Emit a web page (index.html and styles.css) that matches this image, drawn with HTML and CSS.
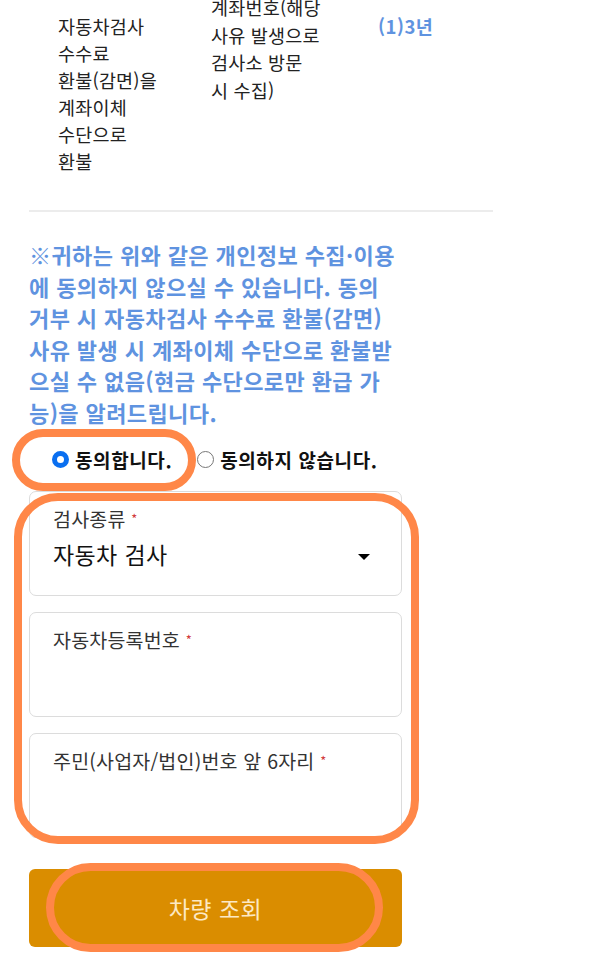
FILE: index.html
```html
<!DOCTYPE html>
<html lang="ko">
<head>
    <meta charset="UTF-8">
    <meta name="viewport" content="width=device-width, initial-scale=1.0">
    <title>자동차검사 차량 조회</title>
    <link rel="stylesheet" href="styles.css">
</head>
<body>
<div class="page">
    <div class="consent-table">
        <div class="cell col-purpose">자동차검사<br>수수료<br>환불(감면)을<br>계좌이체<br>수단으로<br>환불</div>
        <div class="cell col-items">계좌번호(해당<br>사유 발생으로<br>검사소 방문<br>시 수집)</div>
        <div class="cell col-period">(1)3년</div>
    </div>

    <p class="notice">※귀하는 위와 같은 개인정보 수집·이용<br>에 동의하지 않으실 수 있습니다. 동의<br>거부 시 자동차검사 수수료 환불(감면)<br>사유 발생 시 계좌이체 수단으로 환불받<br>으실 수 없음(현금 수단으로만 환급 가<br>능)을 알려드립니다.</p>

    <div class="agree-row">
        <label class="radio"><span class="dot checked"></span>동의합니다.</label>
        <label class="radio"><span class="dot"></span>동의하지 않습니다.</label>
    </div>

    <form class="search-form" onsubmit="return false">
        <div class="field">
            <div class="field-label">검사종류 <span class="req">*</span></div>
            <div class="select-value">
                <span>자동차 검사</span>
                <span class="caret"></span>
            </div>
        </div>
        <div class="field">
            <div class="field-label">자동차등록번호 <span class="req">*</span></div>
        </div>
        <div class="field">
            <div class="field-label">주민(사업자/법인)번호 앞 6자리 <span class="req">*</span></div>
        </div>
        <button class="submit-btn" type="submit">차량 조회</button>
    </form>

    <!-- highlight marks drawn over the screen -->
    <div class="mark mark-agree"></div>
    <div class="mark mark-form"></div>
    <div class="mark mark-button"></div>
</div>
</body>
</html>
```

FILE: styles.css
```css
body {
    margin: 0;
    background: #fff;
    color: #222;
    font-family: "Noto Sans CJK KR", "Noto Sans", sans-serif;
}
.page {
    position: relative;
    width: 602px;
    height: 980px;
    overflow: hidden;
}
.consent-table {
    display: grid;
    grid-template-columns: 153px 167px 144px;
    width: 464px;
    margin-left: 29px;
    padding-bottom: 35px;
    border-bottom: 2px solid #ececec;
}
.cell {
    padding-left: 29px;
    font-size: 18.5px;
    line-height: 27px;
    letter-spacing: 0.2px;
}
.col-purpose {
    padding-top: 13px;
}
.col-items {
    margin-top: -6px;
    line-height: 27.5px;
}
.col-period {
    padding-top: 13px;
    color: #5f93e0;
    font-weight: 700;
    letter-spacing: 0.5px;
}
.notice {
    width: 400px;
    margin: 27px 0 0 29px;
    font-size: 22px;
    line-height: 31.6px;
    letter-spacing: 0.4px;
    font-weight: 700;
    color: #5f93e0;
    white-space: nowrap;
}
.agree-row {
    display: flex;
    align-items: center;
    gap: 25px;
    margin: 19px 0 0 52px;
    height: 24px;
    font-size: 19px;
    letter-spacing: 0.6px;
    font-weight: 700;
    color: #111;
}
.radio {
    display: flex;
    align-items: center;
    gap: 6px;
}
.dot {
    width: 17px;
    height: 17px;
    box-sizing: border-box;
    border-radius: 50%;
    border: 1.5px solid #777;
}
.dot.checked {
    border: 5px solid #0a6ff0;
}
.search-form {
    display: flex;
    flex-direction: column;
    gap: 16px;
    width: 373px;
    margin: 19px 0 0 29px;
}
.field {
    box-sizing: border-box;
    height: 105px;
    padding: 15px 31px 0 23px;
    border: 1.5px solid #dcdcdc;
    border-radius: 7px;
}
.field-label {
    font-size: 19.5px;
    line-height: 24px;
    letter-spacing: 0.2px;
    color: #333;
}
.req {
    color: #d23c3c;
    font-size: 13px;
    vertical-align: top;
}
.select-value {
    display: flex;
    justify-content: space-between;
    align-items: center;
    margin-top: 7px;
    font-size: 23px;
    line-height: 32px;
    letter-spacing: 0.4px;
    color: #111;
}
.caret {
    width: 0;
    height: 0;
    margin-top: 6px;
    border-left: 6px solid transparent;
    border-right: 6px solid transparent;
    border-top: 6px solid #000;
}
.submit-btn {
    height: 78px;
    margin-top: 15px;
    border: none;
    border-radius: 6px;
    background: #da8d00;
    color: #fde9c4;
    font-family: inherit;
    font-size: 23px;
    letter-spacing: 0.5px;
    cursor: pointer;
}
.mark {
    position: absolute;
    box-sizing: border-box;
    border: 8px solid #ff8748;
}
.mark-agree {
    left: 12px;
    top: 429px;
    width: 184px;
    height: 62px;
    border-radius: 31px;
}
.mark-form {
    left: 14px;
    top: 493px;
    width: 405px;
    height: 351px;
    border-radius: 44px;
}
.mark-button {
    left: 46px;
    top: 863px;
    width: 337px;
    height: 89px;
    border-radius: 45px;
}
```
